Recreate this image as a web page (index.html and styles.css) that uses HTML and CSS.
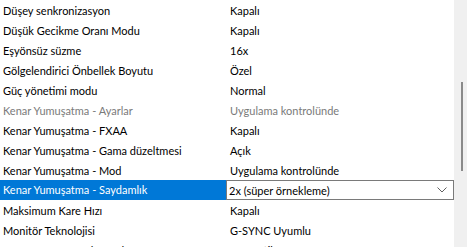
FILE: index.html
```html
<!DOCTYPE html>
<html lang="tr">
<head>
  <meta charset="UTF-8">
  <title>Ayarlar</title>
  <link rel="stylesheet" href="styles.css">
</head>
<body>
  <div class="panel">
    <div class="list">
      <div class="row"><span class="name">Düşey senkronizasyon</span><span class="value">Kapalı</span></div>
      <div class="row"><span class="name">Düşük Gecikme Oranı Modu</span><span class="value">Kapalı</span></div>
      <div class="row"><span class="name">Eşyönsüz süzme</span><span class="value">16x</span></div>
      <div class="row"><span class="name">Gölgelendirici Önbellek Boyutu</span><span class="value">Özel</span></div>
      <div class="row"><span class="name">Güç yönetimi modu</span><span class="value">Normal</span></div>
      <div class="row disabled"><span class="name">Kenar Yumuşatma - Ayarlar</span><span class="value">Uygulama kontrolünde</span></div>
      <div class="row"><span class="name">Kenar Yumuşatma - FXAA</span><span class="value">Kapalı</span></div>
      <div class="row"><span class="name">Kenar Yumuşatma - Gama düzeltmesi</span><span class="value">Açık</span></div>
      <div class="row"><span class="name">Kenar Yumuşatma - Mod</span><span class="value">Uygulama kontrolünde</span></div>
      <div class="row selected">
        <span class="name">Kenar Yumuşatma - Saydamlık</span>
        <div class="combo">
          <span>2x (süper örnekleme)</span>
          <svg class="chevron" width="10" height="6" viewBox="0 0 10 6"><path d="M0.5 0.5 L5 5 L9.5 0.5" fill="none" stroke="#606060" stroke-width="1"/></svg>
        </div>
      </div>
      <div class="row"><span class="name">Maksimum Kare Hızı</span><span class="value">Kapalı</span></div>
      <div class="row"><span class="name">Monitör Teknolojisi</span><span class="value">G-SYNC Uyumlu</span></div>
      <div class="row"><span class="name">OpenGL GPU'su oluşturduğu</span><span class="value">Otomatik</span></div>
    </div>
    <div class="scrollbar">
      <div class="thumb"></div>
    </div>
  </div>
</body>
</html>
```

FILE: styles.css
```css
body {
  margin: 0;
  background: #fff;
  font-family: Lato, sans-serif;
  font-size: 11px;
  color: #000;
  overflow: hidden;
}
.panel {
  display: flex;
  height: 247px;
  overflow: hidden;
}
.list {
  width: 454px;
}
.row {
  display: grid;
  grid-template-columns: 226px 1fr;
  height: 20px;
  align-items: center;
}
.name {
  padding-left: 3px;
  white-space: nowrap;
}
.value {
  padding-left: 4px;
  white-space: nowrap;
}
.disabled {
  color: #7a7a7a;
}
.selected .name {
  background: #0078d7;
  color: #fff;
  height: 20px;
  line-height: 20px;
}
.combo {
  height: 20px;
  box-sizing: border-box;
  border: 1px solid #7a7a7a;
  display: flex;
  align-items: center;
  justify-content: space-between;
  padding: 0 6px 0 2px;
}
.scrollbar {
  width: 13px;
  background: #f0f0f0;
  position: relative;
}
.thumb {
  position: absolute;
  left: 7px;
  top: 82px;
  width: 2px;
  height: 89px;
  background: #8a8a8a;
}
```
